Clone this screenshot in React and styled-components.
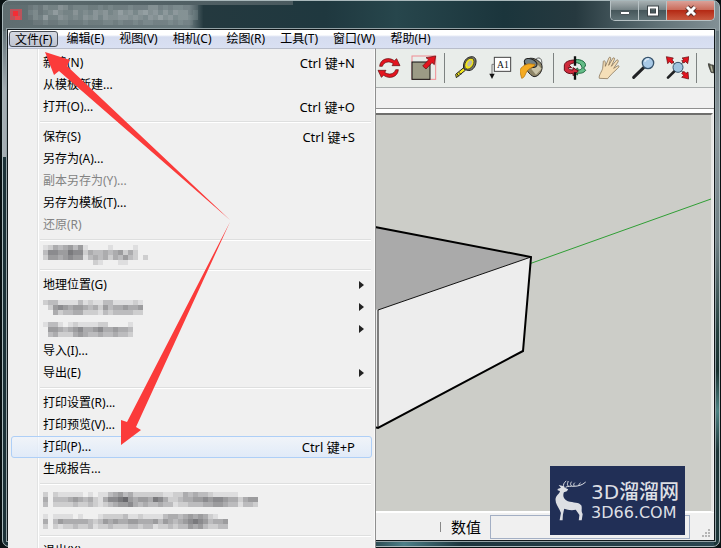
import React from "react";
import styled, {createGlobalStyle} from "styled-components";

const GlobalStyle = createGlobalStyle`
    * {
        box-sizing: border-box;
    }

    body {
        margin: 0;
        background: #0a1214;
        color: #000;
        font-family: "Noto Sans", "Noto Sans CJK SC", sans-serif;
        font-size: 12px;
    }

    button, input {
        margin: 0;
        padding: 0;
        border: 0;
        background: none;
        color: inherit;
        font: inherit;
    }
`;

const Desktop = styled.div`
    position: relative;
    height: 100vh;
    padding: 0 1px 1px 2px;
    overflow: hidden;
`;

const Window = styled.div`
    display: flex;
    flex-direction: column;
    height: 100%;
    padding: 0 4px 5px;
    border: 1px solid #a9b8bb;
    border-radius: 7px;
    background:
        linear-gradient(to bottom, transparent 30px, #66757b 30px, #a4adb3 90px, #a4adb3 156px, transparent 156px) left / 5px 100% no-repeat,
        linear-gradient(to bottom, transparent 30px, #69797f 30px, #8c989d 130px, #6f8085 240px, #24403f 330px, #17302f 370px, #4d8384 410px, #1c3538 450px) right / 5px 100% no-repeat,
        linear-gradient(to right, #1c3238, #1c3238 50%, #4d7f88 56%, #1d353d 64%, #2c4650) bottom / 100% 6px no-repeat,
        linear-gradient(to right, #5d6b6e, #4a5a5f) top left / 290px 4px no-repeat,
        linear-gradient(to right, #5f6d70, #6c7c80 26%, #24393f 28%, #1f383f 45%, #27464c 55%, #1b353c 70%, #26393f 80%, #637479 92%, #829095) top / 100% 30px no-repeat,
        #1c3238;
`;

const TitleBar = styled.header`
    display: flex;
    justify-content: space-between;
    flex: none;
    height: 28px;
`;

const Caption = styled.div`
    display: flex;
    align-items: flex-start;
    gap: 4px;
    padding: 4px 0 0 3px;
`;

const WindowControls = styled.div`
    display: flex;
    height: 20px;
    border: 1px solid #b7c2c5;
    border-top: 0;
    border-radius: 0 0 5px 5px;
    overflow: hidden;
`;

const ControlButton = styled.button`
    display: flex;
    align-items: center;
    justify-content: center;
    width: ${({$close}) => ($close ? 47 : 28)}px;
    border-right: ${({$close}) => ($close ? 0 : 1)}px solid #b7c2c5;
    background: ${({$close}) => $close
        ? "linear-gradient(#dba198, #cb6d5c 45%, #b52a15 50%, #c95a40)"
        : "linear-gradient(#a7b0b2, #778487 45%, #46575b 50%, #607276)"};
`;

const Client = styled.div`
    display: flex;
    flex-direction: column;
    flex: 1;
    min-height: 0;
    border: 1px solid #11181b;
    background: #f0f0f0;
    box-shadow: 0 0 0 1px #93a1a5;
`;

const MenuBar = styled.nav`
    display: flex;
    gap: 1px;
    flex: none;
    height: 19px;
    padding: 1px;
    border-bottom: 1px solid #b8bdca;
    background: linear-gradient(#fff 5px, #e6eaf6 6px, #d5dcef 7px, #d9e0f2);
`;

const MenuBarButton = styled.button`
    padding: 0 ${({$open}) => ($open ? 5 : 7)}px;
    border: ${({$open}) => ($open ? "1px solid #4b5058" : 0)};
    border-radius: 3px;
    background: ${({$open}) => ($open ? "linear-gradient(#d6d9e2, #bfc4d2)" : "none")};
    line-height: 16px;
    white-space: nowrap;
`;

const Toolbar = styled.div`
    display: flex;
    align-items: center;
    flex: none;
    height: 39px;
    padding-left: 365px;
    border-bottom: 1px solid #a9adad;
    background: #e9edea;
    overflow: hidden;
`;

const ToolButton = styled.button`
    display: flex;
    align-items: center;
    justify-content: center;
    flex: none;
    width: 34px;
    height: 34px;
`;

const ToolDivider = styled.span`
    flex: none;
    width: 1px;
    height: 30px;
    margin: 0 3px;
    background: #7d8281;
`;

const SceneTabs = styled.div`
    flex: none;
    height: 21px;
    border-bottom: 1px solid #8f8f8f;
`;

const Viewport = styled.main`
    flex: 1;
    min-height: 0;
    margin-top: 4px;
    margin-right: 1px;
    border-top: 2px solid #6f6f6d;
    border-right: 2px solid #e6e6e4;
    border-bottom: 1px solid #fff;
    background: #cccdc8;
    box-shadow: 0 -4px #fff;

    svg {
        display: block;
        width: 100%;
        height: 100%;
    }
`;

const StatusBar = styled.footer`
    display: flex;
    align-items: center;
    justify-content: flex-end;
    flex: none;
    height: 28px;
    padding-right: 3px;
    border-top: 1px solid #fff;
    font-size: 15px;

    label {
        margin: 0 9px;
        padding-left: 1px;
    }

    input {
        width: 200px;
        height: 24px;
        margin-right: 12px;
        border: 1px solid #a3afc4;
        background: #f0f0f0;
    }
`;

const StatusDivider = styled.span`
    width: 1px;
    height: 10px;
    background: #888;
`;

const Grip = styled.svg`
    align-self: flex-end;
    width: 9px;
    height: 9px;
    margin-bottom: 2px;
`;

const FileMenu = styled.div`
    position: absolute;
    top: 48px;
    left: 8px;
    width: 368px;
    padding: 3px;
    border-right: 1px solid #8f8f8f;
    border-top: 1px solid #b8bdca;
    background: linear-gradient(to right, transparent 29px, #e2e3e3 29px, #e2e3e3 30px, #fff 30px, #fff 31px, transparent 31px), #f0f0f0;
    box-shadow: inset -1px 0 #fafafa;
`;

const MenuItem = styled.button`
    display: flex;
    align-items: center;
    justify-content: space-between;
    width: 100%;
    height: 22px;
    padding: 0 16px 0 31px;
    border: 1px solid ${({$active}) => ($active ? "#aecff7" : "transparent")};
    border-radius: 3px;
    background: ${({$active}) => ($active ? "linear-gradient(rgba(240, 245, 252, .7), rgba(221, 233, 250, .8))" : "none")};
    text-align: left;
    line-height: 20px;

    &:disabled {
        color: #838383;
    }
`;

const Shortcut = styled.span`
    font-size: 13px;
    line-height: 18px;
`;

const SubmenuArrow = styled.span`
    margin-right: -9px;
    border: 4px solid transparent;
    border-left: 5px solid #222;
    border-right: 0;
`;

const Separator = styled.hr`
    height: 2px;
    margin: 3px 1px 3px 29px;
    border: 0;
    border-top: 1px solid #dedfdf;
    border-bottom: 1px solid #fff;
`;

const ArrowLayer = styled.svg`
    position: absolute;
    top: 0;
    left: 0;
    width: 240px;
    height: 460px;
    pointer-events: none;
`;

const Watermark = styled.div`
    position: absolute;
    right: 36px;
    bottom: 13px;
    display: flex;
    align-items: center;
    gap: 4px;
    width: 135px;
    height: 69px;
    padding-left: 4px;
    background: #212f56;
    color: #dddfe4;
    font-family: "DejaVu Sans", "Noto Sans CJK SC", sans-serif;
`;

const WatermarkText = styled.div`
    display: flex;
    flex-direction: column;
    white-space: nowrap;

    strong {
        font-size: 20px;
        font-weight: 500;
        line-height: 24px;
    }

    span {
        font-size: 16px;
        font-weight: 400;
        line-height: 18px;
    }
`;

// every digit is one block, a higher digit is darker, a dot is left empty
const Mosaic = ({rows, cell = 5, color = "#47474c"}) => (
    <svg
        width={rows[0].length * cell}
        height={rows.length * cell}
        shapeRendering="crispEdges"
        aria-hidden="true"
    >
        {rows.map((row, y) => [...row].map((level, x) => level !== "." && (
            <rect
                key={`${x}-${y}`}
                x={x * cell}
                y={y * cell}
                width={cell}
                height={cell}
                fill={color}
                opacity={level / 10}
            />
        )))}
    </svg>
);

const MOSAICS = {
    title: [
        "1213224312221121211121113312122111",
        "2312353224232434235342453424243312",
        "1325224323243424334434324353423322",
        "0112112211121112212112122111212110",
    ],
    layout: [
        "1243453510.0010000100",
        "3665576624334345242.0",
        "2554565513434243532.2",
        "..........21...11....",
    ],
    trimble: [
        "23311113121133111121",
        ".2565455434253445445",
        "..423344222132333322",
    ],
    warehouse: [
        "133101211112200001",
        ".55434564456445443",
        ".34222454334334332",
    ],
    recent1: [
        "2.2111110101134534222222112243433211111.....",
        "4.33345434214667854554764223445565665442455",
        "3.22223223212345564343343312233344554331332",
    ],
    recent2: [
        "1.1111010.0122223112111134434545421...",
        "4.35444443235454455444535434567653445",
        "2.21223223122322233233122323354532233",
    ],
};

const FILE_MENU = [
    {label: "新建(N)", shortcut: "Ctrl 键+N"},
    {label: "从模板新建..."},
    {label: "打开(O)...", shortcut: "Ctrl 键+O"},
    null,
    {label: "保存(S)", shortcut: "Ctrl 键+S"},
    {label: "另存为(A)..."},
    {label: "副本另存为(Y)...", disabled: true},
    {label: "另存为模板(T)..."},
    {label: "还原(R)", disabled: true},
    null,
    {mosaic: "layout"},
    null,
    {label: "地理位置(G)", submenu: true},
    {mosaic: "trimble", submenu: true},
    {mosaic: "warehouse", submenu: true},
    {label: "导入(I)..."},
    {label: "导出(E)", submenu: true},
    null,
    {label: "打印设置(R)..."},
    {label: "打印预览(V)..."},
    {label: "打印(P)...", shortcut: "Ctrl 键+P", active: true},
    {label: "生成报告..."},
    null,
    {mosaic: "recent1"},
    {mosaic: "recent2"},
    null,
    {label: "退出(X)"},
];

const MENUS = ["文件(F)", "编辑(E)", "视图(V)", "相机(C)", "绘图(R)", "工具(T)", "窗口(W)", "帮助(H)"];

const RED = {fill: "#e3141f", stroke: "#5c0a0e", strokeWidth: 2};

// icons are drawn on a 3x grid, x is the left edge of the cell
const Tool = ({name, x, children}) => (
    <ToolButton aria-label={name}>
        <svg width="26" height="26" viewBox={`${x} 24 78 78`} aria-hidden="true">
            {children}
        </svg>
    </ToolButton>
);

const Tools = () => (
    <Toolbar>
        <Tool name="旋转" x={21}>
            <path d="M29 58C30 36 56 28 73 41L80 35L90 56L66 56L70 50C58 41 42 44 37 58Z" {...RED}/>
            <path d="M29 58C30 36 56 28 73 41L80 35L90 56L66 56L70 50C58 41 42 44 37 58Z" transform="rotate(180 57 63)" {...RED}/>
        </Tool>
        <Tool name="缩放" x={123}>
            <rect x="126" y="27" width="71" height="70" fill="none" stroke="#f08c92" strokeWidth="3"/>
            <rect x="126" y="45" width="54" height="52" fill="#9c9b86" stroke="#111" strokeWidth="3"/>
            <path d="M197 27L193 53L186 47L168 66L158 57L176 38L168 32Z" {...RED}/>
        </Tool>
        <ToolDivider/>
        <Tool name="卷尺" x={246}>
            <path d="M286 70L259 92L257 82L281 62Z" fill="#f1e51c" stroke="#222" strokeWidth="3"/>
            <path d="M267 76l6 7M261 80l5 8" stroke="#222" strokeWidth="3"/>
            <path d="M281 64C278 45 288 29 307 29C319 31 320 43 316 55C309 71 295 76 281 64Z" fill="#77766b" stroke="#222" strokeWidth="3"/>
            <ellipse cx="298" cy="50" rx="12" ry="18" transform="rotate(32 298 50)" fill="#f1e51c" stroke="#222" strokeWidth="2"/>
            <ellipse cx="299" cy="49" rx="6" ry="10" transform="rotate(32 299 49)" fill="#bdb9a4"/>
        </Tool>
        <Tool name="文字" x={348}>
            <rect x="373" y="31" width="49" height="42" fill="#fff" stroke="#444" strokeWidth="3"/>
            <text x="381" y="62" fontFamily="Liberation Serif, serif" fontSize="29" fill="#111">A1</text>
            <path d="M373 52H366V82" fill="none" stroke="#777" strokeWidth="3"/>
            <path d="M358 80H374L366 96Z" fill="#111"/>
        </Tool>
        <Tool name="材质" x={450}>
            <path d="M495 39C506 27 518 33 515 53" fill="none" stroke="#222" strokeWidth="2"/>
            <path d="M463 43C478 27 499 33 514 50C522 67 508 89 492 89C478 84 464 65 463 43Z" fill="#8d8567" stroke="#222" strokeWidth="3"/>
            <path d="M484 66L502 52L515 65L498 83Z" fill="#c9c3a7"/>
            <ellipse cx="482" cy="48" rx="20" ry="12" transform="rotate(22 482 48)" fill="#738184" stroke="#222" strokeWidth="3"/>
            <path d="M485 51C470 48 452 59 449 72L455 94C466 92 466 76 475 68C482 62 494 60 495 52Z" fill="#f4ab22" stroke="#ad6d09" strokeWidth="2"/>
        </Tool>
        <ToolDivider/>
        <Tool name="环绕观察" x={48}>
            <path d="M91 38C110 36 124 46 121 57L116 63L122 70C116 79 104 80 97 78L98 84L83 74L98 63L99 69C109 69 113 64 110 59C109 51 101 47 91 47Z" fill="#64bd87" stroke="#17653a" strokeWidth="3"/>
            <path d="M90 39C72 39 57 45 58 57L58 70C62 78 75 82 84 79V86L100 72L84 62V69C74 69 70 66 70 62H80L73 55C78 49 83 48 90 48Z" fill="#cf2a3b" stroke="#65101b" strokeWidth="3"/>
            <path d="M90 28V56M90 76V98" stroke="#111" strokeWidth="7"/>
        </Tool>
        <Tool name="平移" x={150}>
            <path d="M163 94C160 86 171 73 173 64L175 43C177 39 181 41 181 49L181 58L192 32C195 29 198 31 197 36L191 55L204 33C208 31 210 34 208 38L199 58L215 39C219 37 221 41 219 45L206 64L219 56C224 56 222 61 218 64L199 82C193 90 190 91 188 95Z" fill="#f5dfb8" stroke="#776246" strokeWidth="2"/>
        </Tool>
        <Tool name="缩放视图" x={252}>
            <path d="M296 62L266 91" stroke="#202224" strokeWidth="9" strokeLinecap="round"/>
            <circle cx="309" cy="48" r="17" fill="#a8c9e6" stroke="#36536c" strokeWidth="4"/>
            <path d="M299 44q4-9 13-8" fill="none" stroke="#dceaf7" strokeWidth="4"/>
        </Tool>
        <Tool name="充满视窗" x={354}>
            <path d="M389 72L369 92" stroke="#202224" strokeWidth="8" strokeLinecap="round"/>
            <path d="M380 42L390 52M416 44L407 53M408 70L417 80" stroke="#222" strokeWidth="3"/>
            <circle cx="399" cy="61" r="15" fill="#9fc4df" stroke="#36536c" strokeWidth="3"/>
            <path d="M364 29L385 33L381 39L387 45L380 50L374 44L368 50Z" {...RED}/>
            <path d="M432 29L428 50L422 44L416 48L410 41L417 38L411 33Z" {...RED}/>
            <path d="M431 96L410 91L416 85L410 79L417 73L423 79L429 75Z" {...RED}/>
        </Tool>
        <ToolDivider/>
        <Tool name="漫游" x={477}>
            <path d="M490 50C494 49 498 55 505 54L508 78L498 76C496 68 491 62 490 50Z" fill="#57594a" stroke="#222" strokeWidth="2"/>
            <path d="M498 56L502 74" stroke="#b8b9a6" strokeWidth="4"/>
        </Tool>
    </Toolbar>
);

const Scene = () => (
    <svg aria-label="模型">
        <g transform="translate(-8 -115)">
            <path d="M340 220L375 227L531 257L378 310L340 304Z" fill="#aaa"/>
            <path d="M340 304L378 310V428L340 420Z" fill="#e9e9e9"/>
            <path d="M529 264L711 199" stroke="#2f9e35" strokeWidth="1"/>
            <path d="M378 310L531 257L523 351L378 428Z" fill="#ededed"/>
            <path d="M378 428V310L531 257" fill="none" stroke="#111" strokeWidth="1"/>
            <path d="M340 220L375 227L531 257L523 351L378 428L370 426" fill="none" stroke="#000" strokeWidth="2"/>
        </g>
    </svg>
);

const Deer = () => (
    <svg width="33" height="43" viewBox="160 232 100 130" aria-hidden="true">
        <path
            d="M171 262L181 258L174 250L188 253L193 258L203 263L199 269L190 272C186 282 188 293 202 299C219 304 236 301 243 312C246 322 241 328 247 338L244 357H235L237 341L226 325C215 328 200 326 191 322L187 340L186 357H177L181 335C176 318 162 308 165 290C168 280 178 275 178 268L171 266Z"
            fill="#dddfe4"
        />
        <path
            d="M190 257C187 249 190 243 197 238M195 257C207 249 233 262 256 241M203 253C198 248 202 244 203 238M213 253C208 247 211 244 213 240M222 254C218 249 220 246 223 243M236 253C234 249 238 246 240 243"
            fill="none"
            stroke="#dddfe4"
            strokeWidth="3"
        />
    </svg>
);

const App = () => {
    return (
        <Desktop>
            <GlobalStyle/>

            <Window>
                <TitleBar>
                    <Caption>
                        <svg width="14" height="16" shapeRendering="crispEdges" aria-hidden="true">
                            <path d="M0 4H12V15H0Z" fill="#b9545c"/>
                            <path d="M3 6H8V11H3Z" fill="#f52c35"/>
                            <path d="M5 11H10V15H5Z" fill="#e8474d"/>
                        </svg>
                        <Mosaic rows={MOSAICS.title} color="#c0c6c8"/>
                    </Caption>
                    <WindowControls>
                        <ControlButton aria-label="最小化">
                            <svg width="12" height="12"><path d="M1.5 6.5h9v3h-9z" fill="#fff" stroke="#4b5558"/></svg>
                        </ControlButton>
                        <ControlButton aria-label="最大化">
                            <svg width="12" height="12"><path d="M2 2.5h8v7h-8z" fill="none" stroke="#3c4548" strokeWidth="4"/><path d="M2 2.5h8v7h-8z" fill="none" stroke="#fff" strokeWidth="2"/></svg>
                        </ControlButton>
                        <ControlButton $close aria-label="关闭">
                            <svg width="14" height="12"><path d="M3 2l8 8M11 2l-8 8" stroke="#59302b" strokeWidth="5"/><path d="M3 2l8 8M11 2l-8 8" stroke="#fff" strokeWidth="3"/></svg>
                        </ControlButton>
                    </WindowControls>
                </TitleBar>

                <Client>
                    <MenuBar>
                        {MENUS.map((name, i) => (
                            <MenuBarButton key={name} $open={i === 0}>{name}</MenuBarButton>
                        ))}
                    </MenuBar>
                    <Tools/>
                    <SceneTabs/>
                    <Viewport>
                        <Scene/>
                    </Viewport>
                    <StatusBar>
                        <StatusDivider/>
                        <label htmlFor="measure">数值</label>
                        <input id="measure" type="text"/>
                        <Grip aria-hidden="true">
                            <path d="M6 0h2v2h-2zM3 3h2v2h-2zM6 3h2v2h-2zM0 6h2v2h-2zM3 6h2v2h-2zM6 6h2v2h-2z" fill="#b5b5b5"/>
                        </Grip>
                    </StatusBar>
                </Client>
            </Window>

            <FileMenu>
                {FILE_MENU.map((item, i) => item ? (
                    <MenuItem key={i} $active={item.active} disabled={item.disabled}>
                        {item.mosaic ? <Mosaic rows={MOSAICS[item.mosaic]}/> : item.label}
                        {item.shortcut && <Shortcut>{item.shortcut}</Shortcut>}
                        {item.submenu && <SubmenuArrow/>}
                    </MenuItem>
                ) : (
                    <Separator key={i}/>
                ))}
            </FileMenu>

            <ArrowLayer aria-hidden="true">
                <path d="M45 52L70 60L67 66L230 220L59 71L54 75Z" fill="#fb3b3a"/>
                <path d="M121 445V420L127 422L230 222L136 427L141 430Z" fill="#fb3b3a"/>
            </ArrowLayer>

            <Watermark>
                <Deer/>
                <WatermarkText>
                    <strong>3D溜溜网</strong>
                    <span>3D66.COM</span>
                </WatermarkText>
            </Watermark>
        </Desktop>
    );
}

export default App;
